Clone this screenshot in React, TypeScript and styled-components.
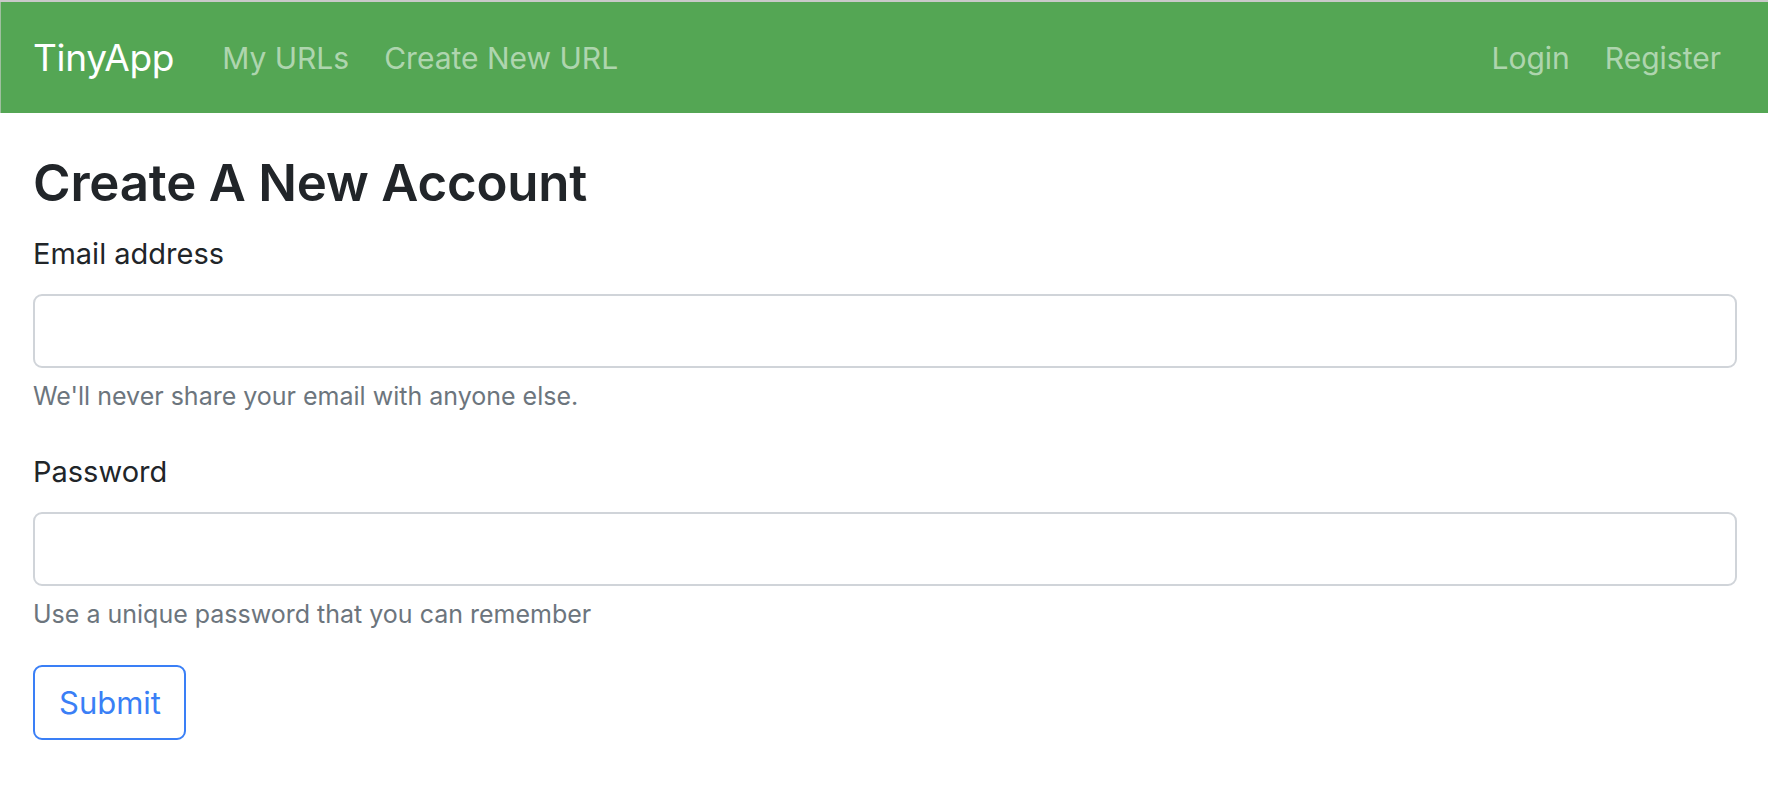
import styled, { createGlobalStyle } from 'styled-components';

const GlobalStyle = createGlobalStyle`
  * {
    box-sizing: border-box;
  }

  body {
    margin: 0;
    background-color: #fff;
    color: #212529;
    font-family: Inter, "Noto Sans", "Liberation Sans", sans-serif;
  }
`;

const Page = styled.div`
  border-top: 2px solid #c9c9c9;
  min-height: 100vh;
`;

const NavBar = styled.nav`
  align-items: center;
  background-color: #54a654;
  border-left: 1px solid #9fbf9e;
  display: flex;
  height: 111px;
  padding: 0 47px 0 32px;
`;

const Brand = styled.a`
  color: #fff;
  font-size: 37px;
  letter-spacing: -0.3px;
  line-height: 1;
  margin-right: 48px;
  text-decoration: none;
`;

const NavList = styled.ul`
  display: flex;
  gap: 35px;
  list-style: none;
  margin: 0;
  padding: 0;

  &:last-child {
    margin-left: auto;
  }
`;

const NavLink = styled.a`
  color: rgba(255, 255, 255, 0.55);
  font-size: 30px;
  line-height: 1;
  text-decoration: none;
`;

const Main = styled.main`
  padding: 39px 31px 0 33px;
`;

const Title = styled.h2`
  font-size: 51px;
  font-weight: 600;
  letter-spacing: -0.2px;
  line-height: 1.2;
  margin: 0 0 19px;
`;

const Field = styled.div<{ $gap: number }>`
  margin-bottom: ${(p) => p.$gap}px;
`;

const Label = styled.label`
  display: block;
  font-size: 29px;
  line-height: 1.5;
  margin-bottom: 18px;
`;

const Input = styled.input`
  background-color: #fff;
  border: 2px solid #d0d4d9;
  border-radius: 9px;
  display: block;
  height: 74px;
  width: 100%;
`;

const Hint = styled.div`
  color: #6c757d;
  font-size: 25px;
  line-height: 1.5;
  margin-top: 10px;
`;

const SubmitButton = styled.button`
  background-color: transparent;
  border: 2px solid #3a7ff6;
  border-radius: 9px;
  color: #3a7ff6;
  font-family: inherit;
  font-size: 31px;
  height: 75px;
  padding: 0 24px;
  width: 153px;
`;

export default function App() {
  return (
    <Page>
      <GlobalStyle />
      <NavBar>
        <Brand href="#">TinyApp</Brand>
        <NavList>
          <li><NavLink href="#">My URLs</NavLink></li>
          <li><NavLink href="#">Create New URL</NavLink></li>
        </NavList>
        <NavList>
          <li><NavLink href="#">Login</NavLink></li>
          <li><NavLink href="#">Register</NavLink></li>
        </NavList>
      </NavBar>
      <Main>
        <Title>Create A New Account</Title>
        <form>
          <Field $gap={35}>
            <Label htmlFor="email">Email address</Label>
            <Input id="email" type="email" />
            <Hint>We'll never share your email with anyone else.</Hint>
          </Field>
          <Field $gap={32}>
            <Label htmlFor="password">Password</Label>
            <Input id="password" type="password" />
            <Hint>Use a unique password that you can remember</Hint>
          </Field>
          <SubmitButton type="submit">Submit</SubmitButton>
        </form>
      </Main>
    </Page>
  );
}
